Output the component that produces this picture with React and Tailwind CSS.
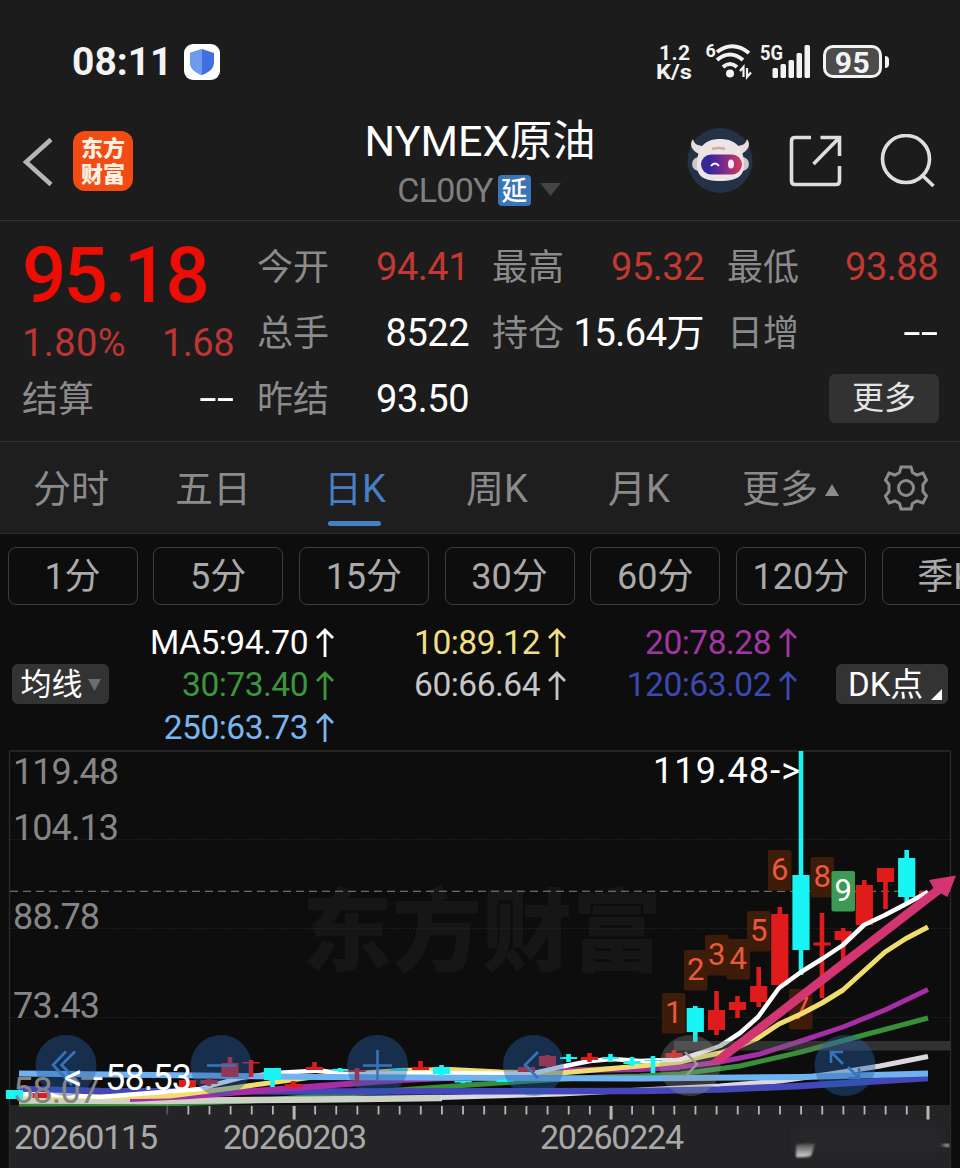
import React from 'react';

const UP = '#e01b1b';
const DOWN = '#19f4f4';

// x centre, body top, body bottom, wick top, wick bottom, colour
const candles = [
  [695.3, 1008, 1032, 1006, 1042, DOWN],
  [716.5, 1010, 1030, 991, 1035, UP],
  [737.5, 1002, 1010, 996, 1018, UP],
  [758.7, 986, 1002, 967, 1007, UP],
  [779.8, 914, 985, 907, 985, UP],
  [801, 875, 950, 751, 975, DOWN],
  [822, 942.5, 945.5, 913, 998, UP],
  [843.2, 931, 940, 928, 968, UP],
  [864.3, 885, 925, 880, 925, UP],
  [885.5, 868, 882, 868, 909, UP],
  [906.7, 858, 897, 850, 902, DOWN],
  [927.7, 891, 894, 891, 894, UP],
];

const smallCandles = [
  [14.5, 1090, 1099, 1090, 1099, DOWN],
  [41, 1093, 1098, 1093, 1098, UP],
  [187.5, 1080, 1087, 1079, 1088, UP],
  [209, 1080, 1084, 1078, 1086, UP],
  [230, 1063, 1077, 1057, 1077, UP],
  [251, 1062, 1063.5, 1060, 1077, UP],
  [272.5, 1068, 1080, 1068, 1087, DOWN],
  [293.5, 1084, 1087, 1081, 1088, UP],
  [314.5, 1067, 1070, 1062, 1070, UP],
  [340, 1069, 1071, 1068, 1072, DOWN],
  [357, 1070, 1072, 1068, 1083, UP],
  [399, 1069, 1071, 1068, 1071, DOWN],
  [420.5, 1067, 1070, 1061, 1070, UP],
  [441.5, 1067, 1074, 1065, 1076, DOWN],
  [463, 1081, 1082.5, 1081, 1083, DOWN],
  [505, 1080, 1082, 1079, 1082, DOWN],
  [526.5, 1067, 1072, 1066, 1072, UP],
  [547.5, 1056, 1066, 1055, 1067, UP],
  [568.5, 1057, 1059, 1054, 1062, DOWN],
  [589.5, 1057, 1060, 1053, 1062, UP],
  [610.5, 1057, 1059, 1054, 1062, DOWN],
  [632, 1061, 1064, 1057, 1066, DOWN],
  [653, 1060, 1061, 1056, 1073, DOWN],
  [674, 1053, 1057, 1050, 1058, UP],
];

const averages = [
  { color: '#3a8f3a', width: 5, points: '19,1104 180,1103.5 250,1101 320,1096 440,1087 530,1081 600,1077 640,1076 680,1074 740,1066 801,1052 864,1035 928,1018' },
  { color: '#ccd3c4', width: 6.5, points: '19,1100.5 160,1101 320,1099.5 440,1098 442,1098' },
  { color: '#d9d9de', width: 5, points: '440,1097.5 560,1094 640,1090 720,1086 780,1081 830,1074 880,1066 928,1056.5' },
  { color: '#4347b8', width: 6.5, points: '19,1089 100,1091 320,1091.5 640,1091 720,1089.5 801,1086 928,1078' },
  { color: '#a52da5', width: 6, points: '130,1099 190,1096 230,1093 320,1086 400,1080 470,1077 540,1073 580,1070 640,1069 680,1067' },
  { color: '#a52da5', width: 5, points: '680,1067 720,1062 760,1054 801,1041 843,1027 885,1010 928,989.5' },
  { color: '#f0dd6e', width: 5, points: '19,1096 100,1097 170,1096 240,1087 320,1076 400,1070.5 450,1069.5 500,1072 560,1073 640,1066 680,1062 700,1057 720,1053 740,1046 758,1038 779,1024 801,1014 822,1003 843,990 864,971 885,952 906,938.5 928,927' },
  { color: '#ffffff', width: 4.5, points: '19,1094 60,1095 100,1097 200,1089 217,1084 240,1078 275,1073 320,1070.5 345,1074 430,1073 530,1074 560,1067 590,1061 612,1059 640,1061 680,1059.5 700,1053 720,1046 740,1033 758,1017 779,988 801,972 822,959 843,945 864,925 885,915 906,904 928,892' },
  { color: '#6fb2f2', width: 6, points: '19,1073.5 200,1075.5 320,1077 640,1078.5 801,1077 928,1073.5' },
];

const signals = [
  ['1', 662, 993],
  ['2', 684, 950],
  ['3', 705, 935],
  ['4', 726.5, 939],
  ['5', 747, 911],
  ['6', 768, 850],
  ['7', 789, 989],
  ['8', 810.5, 857],
  ['9', 831.5, 871],
];

const axisLabels = [
  ['119.48', 784, 106],
  ['104.13', 840, 106],
  ['88.78', 929, 87],
  ['73.43', 1017.5, 87],
  ['58.07', 1103, 87],
];

const dates = [
  ['20260115', 14],
  ['20260203', 223],
  ['20260224', 540],
];

const ticks = Array.from({ length: 37 }, (_, k) => 928 - k * 21.13);

const Candle = ({ data }) => {
  const [x, top, bottom, high, low, color] = data;
  return (
    <g fill={color}>
      <rect x={x - 2.3} y={high} width="4.6" height={low - high} />
      <rect x={x - 8.6} y={top} width="17.2" height={bottom - top} />
    </g>
  );
};

const Chart = () => (
  <svg className="block h-[418px] w-[960px] font-[Roboto,'Noto_Sans_CJK_SC',sans-serif]" viewBox="0 750 960 418">
    {/* Frame, grid and watermark */}
    <rect x="9" y="1105" width="941" height="63" fill="#242426" />
    <text x="302" y="964" fontSize="90" fontWeight="900" fill="#161616" textLength="360">东方财富</text>
    <path d="M9.5 1168V751H950.5V1168" fill="none" stroke="#2b2b2b" strokeWidth="1.4" />
    <path d="M10 839.5H950M10 928.5H950M10 1017.5H950" stroke="#202020" strokeDasharray="2 1.5" />
    <path d="M10 891.3H950" stroke="#8b8676" strokeWidth="1.1" strokeDasharray="8 5" />

    {/* Signal count badges */}
    {signals.map(([n, x, y]) => (
      <g key={n}>
        <rect x={x} y={y} width="23.5" height="40.5" rx="2" fill={n === '9' ? '#3d9a55' : '#3d1c0a'} />
        <text x={x + 11.7} y={y + 30} fontSize="31" textAnchor="middle" fill={n === '9' ? '#ffffff' : '#e9593a'}>{n}</text>
      </g>
    ))}

    {candles.map((c) => <Candle key={c[0]} data={c} />)}

    {averages.map((line) => (
      <polyline key={line.points} points={line.points} fill="none" stroke={line.color} strokeWidth={line.width} strokeLinejoin="round" />
    ))}
    {smallCandles.map((c) => <Candle key={c[0]} data={c} />)}

    <rect x="674" y="1041" width="276" height="9.5" fill="#6a6a6a" fillOpacity="0.4" />

    {/* Chart controls */}
    <g fill="#2560a6" fillOpacity="0.42">
      <circle cx="66" cy="1065.500" r="30.500" />
      <circle cx="221" cy="1065.500" r="30.500" />
      <circle cx="377.500" cy="1065.500" r="30.500" />
      <circle cx="533.500" cy="1065.500" r="30.500" />
      <circle cx="845" cy="1065.500" r="30.500" />
    </g>
    <circle cx="690" cy="1065.500" r="30.500" fill="#999999" fillOpacity="0.3" />
    <g fill="none" stroke="#3674bd" strokeWidth="2.600">
      <path d="M66 1051.500L53 1065L72 1085M75 1051.500L61.500 1065L80 1084" />
      <path d="M207 1065.500H236" />
      <path d="M363 1065.500H392M377.500 1050V1080" />
      <path d="M538 1052L525 1065L538 1078" />
      <path d="M831 1063V1052H843M832 1053L843 1064M859 1068V1078H848M848 1067L858 1077" />
    </g>
    <path d="M685 1052L697 1064L685 1077" fill="none" stroke="#999999" strokeWidth="2.400" />

    {axisLabels.map(([label, y, w]) => (
      <text key={label} x="13" y={y} fontSize="36" fill="#858585" textLength={w}>{label}</text>
    ))}

    {/* Highest and lowest price in view */}
    <text x="653" y="782.500" fontSize="36" fill="#ffffff" textLength="147">119.48-&gt;</text>
    <text x="64" y="1090" fontSize="36" fill="#ffffff" textLength="39">&lt;-</text>
    <text x="105" y="1090" fontSize="36" fill="#ffffff" textLength="87">58.53</text>

    {/* Trend arrow */}
    <path d="M708 1063L933.500 888L929 880L956 875.500L947.500 897L941 893.500L722 1063Z" fill="#d23571" />

    {ticks.map((x, k) => (
      <rect key={x} x={x - (k % 15 === 0 ? 1.5 : 1)} y="1106" width={k % 15 === 0 ? 3 : 1.8} height={k % 15 === 0 ? 13.5 : 8.5} fill={k === 36 ? '#555555' : '#b5b5b5'} />
    ))}
    {dates.map(([label, x]) => (
      <text key={label} x={x} y="1148.500" fontSize="34" fill="#a9a9a9" textLength="144">{label}</text>
    ))}

    {/* Smudged stamp in the corner */}
    <defs>
      <linearGradient id="smudge" x1="0" y1="0" x2="0" y2="1">
        <stop offset="0" stopColor="#444444" />
        <stop offset="1" stopColor="#d6d6d6" />
      </linearGradient>
      <filter id="soft"><feGaussianBlur stdDeviation="1.300" /></filter>
      <filter id="softer"><feGaussianBlur stdDeviation="6" /></filter>
    </defs>
    <rect x="797" y="1128" width="142" height="24" fill="#282829" filter="url(#softer)" />
    <path d="M796 1145Q806 1142 815 1144L811 1156Q804 1158 796 1157Z" fill="url(#smudge)" filter="url(#soft)" />
    <path d="M940 1145L949 1144V1147Z" fill="#c5c5c5" filter="url(#soft)" />
  </svg>
);

const StatusBar = () => (
  <div className="flex h-[100px] items-center pt-[23px] pl-[72px] text-[#f3f3f3]">
    <span className="w-[112px] pt-0.5 text-[39px] leading-none font-bold">08:11</span>
    <span className="flex size-9 items-center justify-center rounded-[9px] bg-white">
      <svg width="26" height="28" viewBox="0 0 26 28">
        <path d="M13 1L25 5V14C25 21 19 25 13 27C7 25 1 21 1 14V5Z" fill="#426fdf" />
        <path d="M13 1L1 5V14C1 21 7 25 13 27Z" fill="#6c9bf0" />
      </svg>
    </span>
    <svg className="ml-[435px] overflow-visible" width="155" height="40" viewBox="655 42 155 40" fontWeight="700" fill="#f3f3f3">
      <text x="659" y="60" fontSize="21" textLength="31">1.2</text>
      <text x="656" y="79" fontSize="21" textLength="36" lengthAdjust="spacingAndGlyphs">K/s</text>
      <text x="705.500" y="57" fontSize="18">6</text>
      <g fill="none" stroke="#f3f3f3" strokeWidth="4">
        <path d="M717 52Q733 40 749 53" />
        <path d="M717 60Q730 49 743 60" />
        <path d="M723 67Q730 61 737 67" />
      </g>
      <circle cx="730" cy="73.500" r="4" />
      <path d="M740 71L743.500 67V77M747 68V77L751 72.500" fill="none" stroke="#f3f3f3" strokeWidth="2.200" />
      <text x="760" y="60" fontSize="20" textLength="23" lengthAdjust="spacingAndGlyphs">5G</text>
      <rect x="772.500" y="68" width="5.500" height="10" rx="1.500" />
      <rect x="780.500" y="64" width="5.500" height="14" rx="1.500" />
      <rect x="788.500" y="60" width="5.500" height="18" rx="1.500" />
      <rect x="796.500" y="53" width="5.500" height="25" rx="1.500" />
      <rect x="804.500" y="45" width="5.500" height="33" rx="1.500" />
    </svg>
    <span className="ml-[13px] flex h-[33px] w-[59px] items-center justify-center rounded-[10px] border-3 border-[#f3f3f3] bg-[#4c4c4c] pt-0.5 text-[30px] leading-none font-bold tracking-[0.5px]">95</span>
    <span className="ml-[3px] h-3 w-1 rounded-r-sm bg-[#f3f3f3]" />
  </div>
);

const Header = () => (
  <header className="flex h-[121px] items-start border-b border-[#323232]">
    <svg className="mt-[37px] ml-[22px] shrink-0" width="32" height="50" viewBox="0 0 32 50">
      <path d="M29 2.500L4 25L29 47.500" fill="none" stroke="#b5b5b5" strokeWidth="4.500" />
    </svg>
    <div className="mt-[31px] ml-[19px] flex size-[60px] shrink-0 flex-col items-center justify-center rounded-xl bg-[#f24c14] pt-0.5 text-[22px] leading-[26px] font-black text-[#fff0e0]">
      <span>东方</span>
      <span>财富</span>
    </div>
    <div className="ml-[227px] flex w-[240px] flex-col items-center pt-[19px]">
      <h1 className="text-[43px] leading-[44px] whitespace-nowrap text-white">NYMEX原油</h1>
      <div className="mt-[9px] mr-0.5 flex items-center">
        <span className="text-[34px] leading-[36px] tracking-[-0.7px] text-[#7f7f7f]">CL00Y</span>
        <span className="ml-[5px] flex h-[31px] w-[33px] items-center justify-center rounded bg-[#3c74b8] pt-0.5 text-[26px] leading-none font-medium text-white">延</span>
        <svg className="ml-[9px]" width="21" height="14" viewBox="0 0 21 14"><path d="M0 0H21L10.500 13Z" fill="#444444" /></svg>
      </div>
    </div>
    <svg className="mt-[27px] ml-[87px] shrink-0" width="66" height="66" viewBox="687 127 66 66">
      <circle cx="720" cy="160.500" r="32.500" fill="#243246" />
      <path d="M699 154C691 150 689 144 693 139C694 144 698 146 704 146ZM741 154C749 150 751 144 747 139C746 144 742 146 736 146Z" fill="#e9dede" />
      <circle cx="699" cy="164" r="7" fill="#cfc4c8" />
      <circle cx="742" cy="164" r="7" fill="#cfc4c8" />
      <path d="M697 165C697 147 705 139 720 139C735 139 744 147 744 165C744 176 737 181 720 181C703 181 697 176 697 165Z" fill="#ece4e5" />
      <path d="M712 149Q718 147 725 149" fill="none" stroke="#d5a99b" strokeWidth="2.500" />
      <defs>
        <linearGradient id="visor">
          <stop offset="0.2" stopColor="#34289a" />
          <stop offset="0.55" stopColor="#7b2a8c" />
          <stop offset="1" stopColor="#d63a58" />
        </linearGradient>
      </defs>
      <rect x="701" y="154.500" width="41" height="20" rx="10" fill="url(#visor)" />
      <path d="M711 166Q715 161 719 166" fill="none" stroke="#ffffff" strokeWidth="2" />
      <ellipse cx="731" cy="164" rx="3" ry="4.500" fill="#fde9f4" />
    </svg>
    <svg className="mt-[34px] ml-[36px] shrink-0" width="54" height="54" viewBox="789 134 54 54">
      <g fill="none" stroke="#dedede" strokeWidth="3.600">
        <path d="M811 137.500H795Q791.500 137.500 791.500 141V181Q791.500 184.500 795 184.500H836Q839.500 184.500 839.500 181V166" />
        <path d="M820.500 137.500H839.500V156M839 138L813.500 164" />
      </g>
    </svg>
    <svg className="mt-[34px] ml-[37px] shrink-0" width="56" height="54" viewBox="880 134 56 54">
      <g fill="none" stroke="#dedede" strokeWidth="3.600">
        <circle cx="906" cy="159" r="23.500" />
        <path d="M921.500 174.500L933.500 186" />
      </g>
    </svg>
  </header>
);

const Field = ({ label, value, tone = 'text-white' }) => (
  <div className="flex items-center justify-between whitespace-nowrap">
    <span className="pt-[3px] text-[36px] text-[#8b8b8b]">{label}</span>
    <span className={value === '--' ? 'origin-right scale-x-[1.65] text-[38px] text-white' : `pt-px text-[38px] tracking-[-0.5px] ${tone}`}>{value}</span>
  </div>
);

const Quote = () => (
  <section className="grid h-[221px] grid-cols-[212px_212px_212px_211px] grid-rows-[66px_66px_66px] gap-x-[23px] border-b border-[#303030] pt-3 pl-[22px] leading-none">
    <div className="row-span-2 pt-[3px]">
      <div className="text-[78px] leading-[80px] font-medium tracking-[-2.8px] text-[#ec0d05]">95.18</div>
      <div className="mt-[7px] flex justify-between text-[38px] leading-[40px] text-[#bd3535]">
        <span className="tracking-[0.4px]">1.80%</span>
        <span className="tracking-[-0.5px]">1.68</span>
      </div>
    </div>
    <Field label="今开" value="94.41" tone="text-[#c33931]" />
    <Field label="最高" value="95.32" tone="text-[#c33931]" />
    <Field label="最低" value="93.88" tone="text-[#c33931]" />
    <Field label="总手" value="8522" />
    <Field label="持仓" value="15.64万" />
    <Field label="日增" value="--" />
    <Field label="结算" value="--" />
    <Field label="昨结" value="93.50" />
    <button className="col-start-4 -mr-px h-[49px] w-[110px] self-center justify-self-end rounded-md bg-[#323232] text-[32px] text-[#e3e3e3]">更多</button>
  </section>
);

const Tabs = () => (
  <nav className="flex h-[92px] items-start border-b border-[#2a2a2a] bg-[#1e1e1f] text-[38px] leading-[95px] text-[#8b8b8b]">
    {['分时', '五日', '日K', '周K', '月K'].map((tab) => (
      <div key={tab} className={tab === '日K' ? 'relative w-[142px] text-center text-[#477fc4]' : 'w-[142px] text-center'}>
        {tab}
        {tab === '日K' && <span className="absolute top-[79px] left-[44px] h-[5px] w-[53px] rounded-full bg-[#477fc4]" />}
      </div>
    ))}
    <div className="flex w-[130px] items-center pl-8">
      更多
      <svg className="ml-[7px] shrink-0" width="14" height="12" viewBox="0 0 14 12"><path d="M7 0L14 12H0Z" fill="#8b8b8b" /></svg>
    </div>
    <svg className="mt-[23px] ml-[43px] shrink-0" width="46" height="46" viewBox="-23 -23 46 46">
      <g fill="none" stroke="#8b8b8b" strokeWidth="3">
        <path d="M-5 -21H5L6.500 -15.500L11 -13L17 -15L20.500 -8L17 -3.500V3.500L20.500 8L17 15L11 13L6.500 15.500L5 21H-5L-6.500 15.500L-11 13L-17 15L-20.500 8L-17 3.500V-3.500L-20.500 -8L-17 -15L-11 -13L-6.500 -15.500Z" />
        <circle r="7.500" />
      </g>
    </svg>
  </nav>
);

const Periods = () => (
  <div className="flex h-[86px] gap-[15.7px] overflow-hidden pt-[13px] pl-[7.500px]">
    {['1分', '5分', '15分', '30分', '60分', '120分', '季K'].map((period) => (
      <div key={period} className="h-[58px] w-[130px] shrink-0 rounded-lg border-[1.5px] border-[#3d3d3d] text-center text-[36px] leading-[59px] text-[#aaaaaa]">
        {period}
      </div>
    ))}
  </div>
);

const Average = ({ children, className }) => (
  <div className={`flex h-[42.5px] items-center justify-end gap-2 ${className}`}>
    <span>{children}</span>
    <svg className="shrink-0" width="18" height="30" viewBox="0 0 18 30">
      <path d="M9 30V3M1 11L9 3L17 11" fill="none" stroke="currentColor" strokeWidth="2.800" />
    </svg>
  </div>
);

const Legend = () => (
  <div className="flex h-[130px] items-start pl-3">
    <div className="mt-[44px] flex h-10 w-[97px] items-center justify-center gap-[5px] rounded-md bg-[#333333] pt-px text-[31px] leading-none text-white">
      均线
      <svg width="13" height="12" viewBox="0 0 13 12"><path d="M0 0H13L6.500 12Z" fill="#6c6c6c" /></svg>
    </div>
    <div className="grid w-[689px] grid-cols-[225px_232px_231px] pt-px text-[33.5px] leading-none tracking-[-0.5px]">
      <Average className="text-white">MA5:94.70</Average>
      <Average className="text-[#f0df84]">10:89.12</Average>
      <Average className="text-[#a336a3]">20:78.28</Average>
      <Average className="text-[#3d963d]">30:73.40</Average>
      <Average className="text-[#c6c6c6]">60:66.64</Average>
      <Average className="text-[#3b4ab0]">120:63.02</Average>
      <Average className="text-[#7ab5ef]">250:63.73</Average>
    </div>
    <div className="mt-[44px] ml-[38px] flex h-10 w-[112px] items-center rounded-md bg-[#333333] pl-[12px] text-[33px] leading-none whitespace-nowrap text-white">
      DK点
      <svg className="mt-5 ml-2 shrink-0" width="11" height="11" viewBox="0 0 11 11"><path d="M11 0V11H0Z" fill="#ffffff" /></svg>
    </div>
  </div>
);

export default function App() {
  return (
    <div className="h-[1168px] w-[960px] overflow-hidden bg-[#0d0d0d] font-[Roboto,'Noto_Sans_CJK_SC',sans-serif]">
      <div className="bg-[#1c1c1c]">
        <StatusBar />
        <Header />
        <Quote />
        <Tabs />
      </div>
      <Periods />
      <Legend />
      <Chart />
    </div>
  );
}
